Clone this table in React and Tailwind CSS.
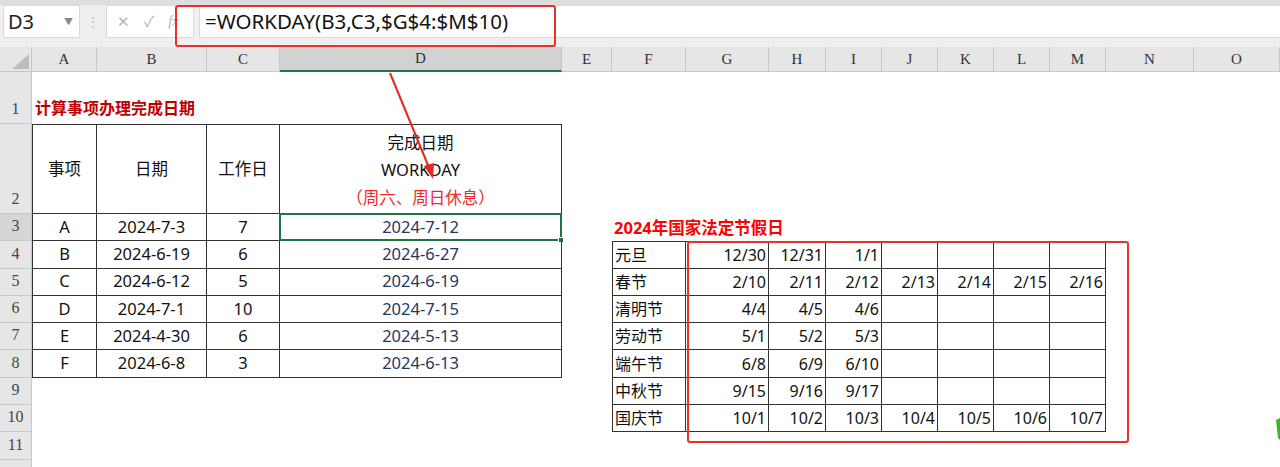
import React from 'react';

const COLS = ['A', 'B', 'C', 'D', 'E', 'F', 'G', 'H', 'I', 'J', 'K', 'L', 'M', 'N', 'O'];
const ROW_START = ['row-start-1', 'row-start-2', 'row-start-3', 'row-start-4', 'row-start-5', 'row-start-6', 'row-start-7', 'row-start-8', 'row-start-9', 'row-start-10', 'row-start-11', 'row-start-12'];

const tasks = [
  ['A', '2024-7-3', '7', '2024-7-12'],
  ['B', '2024-6-19', '6', '2024-6-27'],
  ['C', '2024-6-12', '5', '2024-6-19'],
  ['D', '2024-7-1', '10', '2024-7-15'],
  ['E', '2024-4-30', '6', '2024-5-13'],
  ['F', '2024-6-8', '3', '2024-6-13'],
];

const holidays = [
  ['元旦', ['12/30', '12/31', '1/1', '', '', '', '']],
  ['春节', ['2/10', '2/11', '2/12', '2/13', '2/14', '2/15', '2/16']],
  ['清明节', ['4/4', '4/5', '4/6', '', '', '', '']],
  ['劳动节', ['5/1', '5/2', '5/3', '', '', '', '']],
  ['端午节', ['6/8', '6/9', '6/10', '', '', '', '']],
  ['中秋节', ['9/15', '9/16', '9/17', '', '', '', '']],
  ['国庆节', ['10/1', '10/2', '10/3', '10/4', '10/5', '10/6', '10/7']],
];

const sans = "font-['Noto_Sans','Noto_Sans_CJK_SC',sans-serif]";
const sheetCols = 'grid-cols-[32px_65px_110px_73px_282px_50px_74px_83px_57px_56px_56px_56px_56px_56px_88px_86px]';

const FormulaBar = () => (
  <div className="h-[47px] bg-[#efefef] border-t-[5px] border-[#dedede] flex items-start gap-[5px] pl-[3px]">
    <div className="w-[77px] h-[33px] bg-white border border-[#dadada] flex items-center justify-between px-[4px]">
      <span className="text-[20px] text-[#222]">D3</span>
      <span className="text-[9px] text-[#888] mr-[2px]">▼</span>
    </div>
    <div className="w-[16px] h-[33px] flex items-center justify-center text-[#bbb] text-[12px]">⋮</div>
    <div className="w-[88px] h-[33px] bg-white border border-[#dadada] flex items-center gap-[14px] pl-[10px] text-[#b5b5b5] text-[15px]">
      <span>✕</span>
      <span>✓</span>
      <span className="italic font-['Liberation_Serif',serif] text-[14px]">fx</span>
    </div>
    <div className="flex-1 h-[33px] bg-white border-y border-l border-[#dadada] flex items-center pl-[5px]">
      <span className="text-[20.5px] text-[#111]">=WORKDAY(B3,C3,$G$4:$M$10)</span>
    </div>
  </div>
);

const ColumnHeader = () => (
  <div className={`grid ${sheetCols} h-[21px] font-['Liberation_Serif',serif] text-[15px] text-[#333]`}>
    <div className="bg-[#e6e6e6] border-r border-b border-[#c6c6c6] relative">
      <div className="absolute right-[2px] bottom-[2px] w-0 h-0 border-l-[17px] border-l-transparent border-b-[15px] border-b-[#bdbdbd]" />
    </div>
    {COLS.map((c) =>
      c === 'D' ? (
        <div key={c} className="bg-[#d2d2d2] border-r border-[#c6c6c6] border-b-2 border-b-[#217346] flex items-center justify-center">{c}</div>
      ) : (
        <div key={c} className="bg-[#e6e6e6] border-r border-b border-[#c6c6c6] flex items-center justify-center">{c}</div>
      )
    )}
  </div>
);

const TaskTable = () => {
  const cell = 'border-r border-b border-[#333] flex items-center justify-center';
  return (
    <div className={`col-start-2 col-span-4 row-start-2 row-span-7 grid grid-cols-[65px_110px_73px_282px] grid-rows-[90px_repeat(6,27.3px)] text-[16.5px] text-[#111] ${sans}`}>
      <div className={`${cell} border-t border-l`}>事项</div>
      <div className={`${cell} border-t`}>日期</div>
      <div className={`${cell} border-t`}>工作日</div>
      <div className={`${cell} border-t flex-col leading-[27.5px] pt-[2px]`}>
        <span>完成日期</span>
        <span>WORKDAY</span>
        <span className="text-[#f0282d]">（周六、周日休息）</span>
      </div>
      {tasks.map((r, i) => (
        <React.Fragment key={r[0]}>
          <div className={`${cell} border-l`}>{r[0]}</div>
          <div className={cell}>{r[1]}</div>
          <div className={cell}>{r[2]}</div>
          <div className={`${cell} text-[#1f3864] relative`}>
            {r[3]}
            {i === 0 && (
              <div className="absolute -left-px -top-px -right-px -bottom-px border-2 border-[#217346]">
                <div className="absolute -right-[4px] -bottom-[4px] w-[6px] h-[6px] bg-[#217346] border border-white" />
              </div>
            )}
          </div>
        </React.Fragment>
      ))}
    </div>
  );
};

const HolidayTable = () => {
  const cell = 'border-r border-b border-[#333] flex items-center';
  return (
    <div className={`col-start-7 col-span-8 row-start-4 row-span-7 grid grid-cols-[74px_83px_57px_56px_56px_56px_56px_56px] grid-rows-[repeat(7,27.3px)] text-[16px] text-[#111] ${sans}`}>
      {holidays.map(([name, days], i) => (
        <React.Fragment key={name}>
          <div className={`${cell} border-l pl-[2px] ${i === 0 ? 'border-t' : ''}`}>{name}</div>
          {days.map((d, j) => (
            <div key={j} className={`${cell} justify-end pr-[2px] ${i === 0 ? 'border-t' : ''}`}>{d}</div>
          ))}
        </React.Fragment>
      ))}
    </div>
  );
};

const Sheet = () => (
  <div className={`grid ${sheetCols} grid-rows-[56px_90px_repeat(10,27.3px)] h-[399px] overflow-hidden`}>
    {ROW_START.map((rs, i) => (
      <div
        key={rs}
        className={`col-start-1 ${rs} ${i === 2 ? 'bg-[#d6d6d6]' : 'bg-[#e6e6e6]'} border-r border-b border-[#c6c6c6] flex items-end justify-center pb-[2px] font-['Liberation_Serif',serif] text-[16px] text-[#444]`}
      >
        {i < 11 ? i + 1 : ''}
      </div>
    ))}
    <div className={`col-start-2 col-span-4 row-start-1 flex items-end pb-[4px] pl-[3px] text-[16px] font-bold text-[#c00000] ${sans}`}>
      计算事项办理完成日期
    </div>
    <TaskTable />
    <div className={`col-start-7 col-span-5 row-start-3 flex items-end pb-[1px] pl-[2px] text-[16.5px] font-bold text-[#ff0000] ${sans}`}>
      2024年国家法定节假日
    </div>
    <HolidayTable />
  </div>
);

export default function App() {
  return (
    <div className={`relative w-[1280px] h-[467px] overflow-hidden bg-white ${sans}`}>
      <FormulaBar />
      <ColumnHeader />
      <Sheet />

      {/* red callouts */}
      <div className="absolute left-[175px] top-[5px] w-[381px] h-[42px] border-2 border-[#e8302c] rounded-[3px]" />
      <div className="absolute left-[687px] top-[241px] w-[442px] h-[202px] border-2 border-[#e8302c] rounded-[3px]" />
      <svg className="absolute left-0 top-0" width="1280" height="467">
        <line x1="390" y1="73" x2="430" y2="170" stroke="#e8251f" strokeWidth="2" />
        <polygon points="433,179 424,166 434,163" fill="#e8251f" />
        <polygon points="1276,420 1280,418 1280,440 1278,438" fill="#3cb528" />
      </svg>
    </div>
  );
}
